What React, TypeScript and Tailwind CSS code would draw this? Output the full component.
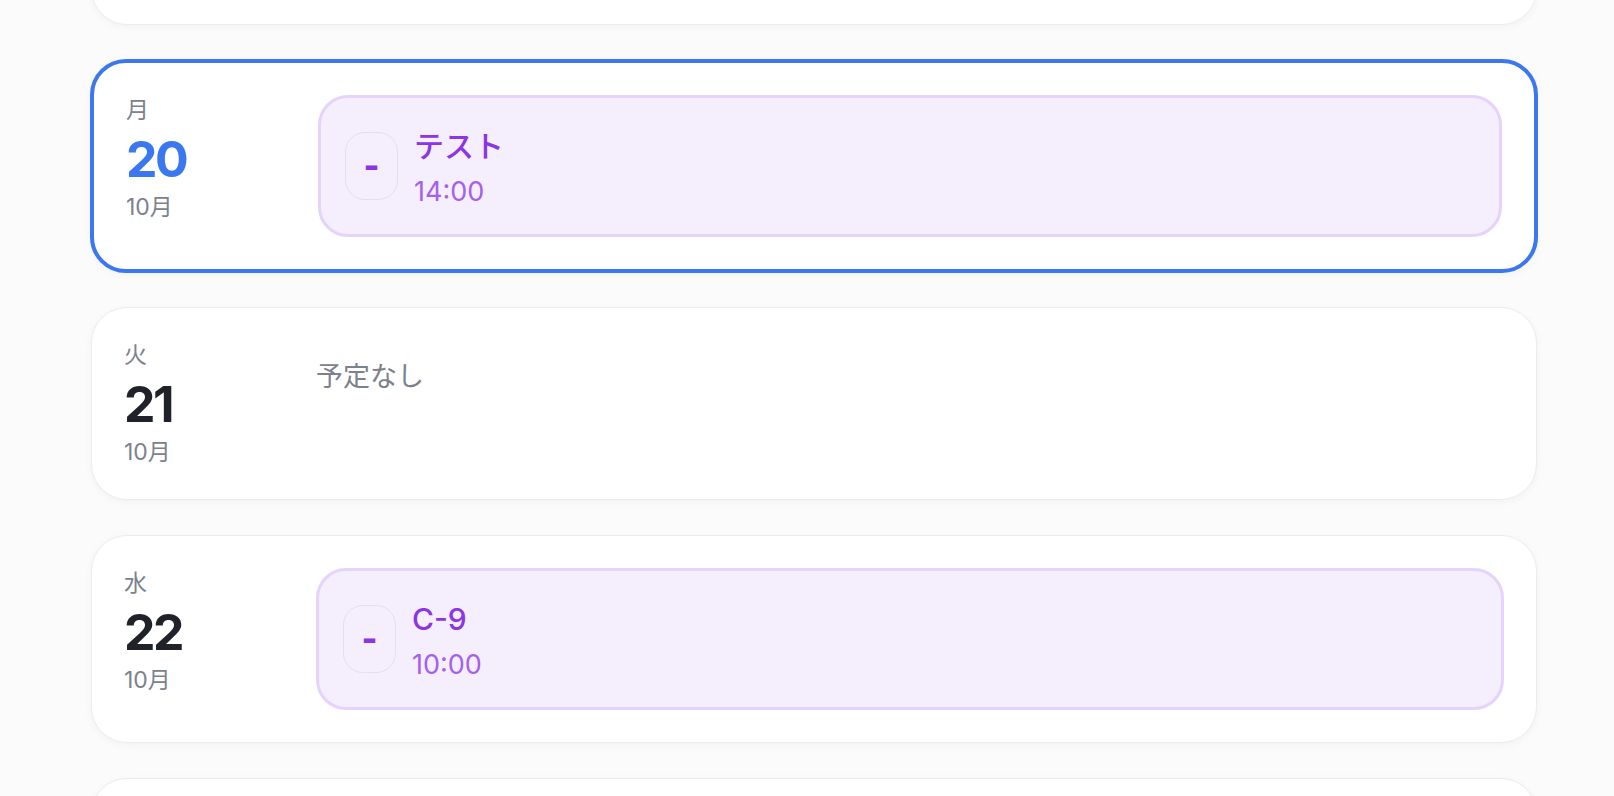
import React from "react";

type Ev = { title: string; time: string };
type Day = { wd: string; d: number; m: string; events: Ev[]; selected?: boolean };

const days: Day[] = [
  { wd: "月", d: 20, m: "10月", events: [{ title: "テスト", time: "14:00" }], selected: true },
  { wd: "火", d: 21, m: "10月", events: [] },
  { wd: "水", d: 22, m: "10月", events: [{ title: "C-9", time: "10:00" }] },
];

function EventCard({ ev }: { ev: Ev }) {
  return (
    <div className="flex flex-1 items-center gap-[16px] rounded-[30px] border-[3px] border-[#e6d3fb] bg-[#f5eefd] px-[24px] py-[24px]">
      <div className="flex h-[68px] w-[53px] shrink-0 items-center justify-center rounded-[20px] border border-[#e6ddf1]">
        <span className="text-[34px] font-extrabold leading-none text-[#8b35e3]">-</span>
      </div>
      <div className="flex flex-col pt-[3px]">
        <div className="text-[30px] font-medium leading-[42px] text-[#8b35e3]">{ev.title}</div>
        <div className="mt-[7px] text-[27px] leading-[36px] text-[#a461ec]">{ev.time}</div>
      </div>
    </div>
  );
}

function DayCard({ day }: { day: Day }) {
  const cls = day.selected
    ? "-m-px border-4 border-[#3b78f0]"
    : "border border-[#ececec]";
  return (
    <div
      className={`flex items-start gap-[24px] rounded-[36px] bg-white p-[32px] shadow-[0_2px_8px_rgba(0,0,0,0.04)] ${cls}`}
    >
      <div className="flex w-[168px] shrink-0 flex-col">
        <div className="text-[23px] leading-[30px] text-[#7c818c]">{day.wd}</div>
        <div
          className={`mt-[8px] text-[50px] font-bold leading-[52px] tracking-[-0.05em] ${
            day.selected ? "text-[#3b78f0]" : "text-[#1f2329]"
          }`}
        >
          {day.d}
        </div>
        <div className="mt-[7px] text-[23px] leading-[30px] text-[#7c818c]">{day.m}</div>
      </div>
      {day.events.length > 0 ? (
        <div className="flex flex-1 flex-col gap-[16px]">
          {day.events.map((ev, i) => (
            <EventCard key={i} ev={ev} />
          ))}
        </div>
      ) : (
        <div className="mt-[16px] text-[27px] leading-[42px] text-[#7c818c]">予定なし</div>
      )}
    </div>
  );
}

function ShellCard() {
  return (
    <div className="h-[193px] rounded-[36px] border border-[#ececec] bg-white shadow-[0_2px_8px_rgba(0,0,0,0.04)]" />
  );
}

export default function App() {
  return (
    <div className="h-[796px] w-full overflow-hidden bg-[#fbfbfb] font-['Inter','Noto_Sans_CJK_JP',sans-serif]">
      <div className="-mt-[168px] ml-[91px] mr-[77px] flex flex-col gap-[35px]">
        <ShellCard />
        {days.map((d) => (
          <DayCard key={d.d} day={d} />
        ))}
        <ShellCard />
      </div>
    </div>
  );
}
